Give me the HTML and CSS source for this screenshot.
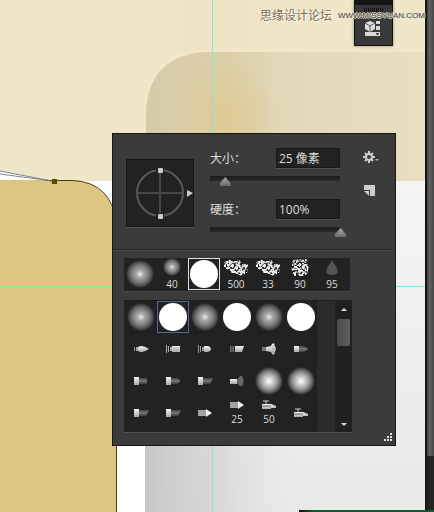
FILE: index.html
```
<!DOCTYPE html>
<html lang="zh-CN">

<head>
    <meta charset="UTF-8">
    <meta name="viewport" content="width=device-width, initial-scale=1.0">
    <title>画笔预设</title>
    <link rel="stylesheet" href="styles.css">
</head>

<body>
    <!-- shared icons -->
    <svg class="symbols" aria-hidden="true">
        <defs>
            <linearGradient id="metal" x1="0" y1="0" x2="0" y2="1">
                <stop offset="0" stop-color="#f4f4f4" />
                <stop offset="1" stop-color="#a8a8a8" />
            </linearGradient>
            <linearGradient id="bristle" x1="0" y1="0" x2="0" y2="1">
                <stop offset="0" stop-color="#444" />
                <stop offset=".5" stop-color="#777" />
                <stop offset="1" stop-color="#3c3c3c" />
            </linearGradient>
            <filter id="rough" x="-10%" y="-20%" width="120%" height="140%">
                <feTurbulence type="fractalNoise" baseFrequency=".45" numOctaves="2" seed="4" />
                <feColorMatrix values="0 0 0 0 .9  0 0 0 0 .9  0 0 0 0 .9  9 0 0 0 -3.9" result="n" />
                <feComposite in="n" in2="SourceGraphic" operator="in" />
            </filter>
        </defs>
        <symbol id="tip-point" viewBox="0 0 16 8">
            <path d="M1 2h1v4H1zM3 2h2v4H3z" fill="#999" />
            <path d="M5 2q4-3 11 2q-7 5-11 2z" fill="url(#metal)" />
        </symbol>
        <symbol id="tip-flat" viewBox="0 0 16 8">
            <path d="M1 0h1v8H1zM3 1h1v6H3zM5 2h2v4H5z" fill="#aaa" />
            <path d="M7 1h8v6H7z" fill="url(#metal)" />
            <path d="M8 3h6M8 5h6" stroke="#999" stroke-width=".5" />
        </symbol>
        <symbol id="tip-curve" viewBox="0 0 16 8">
            <path d="M1 0h1v8H1zM3 1h1v6H3zM5 2h2v4H5z" fill="#999" />
            <path d="M7 1h4q3 1 3 3t-3 3H7z" fill="url(#metal)" />
        </symbol>
        <symbol id="tip-angle" viewBox="0 0 16 8">
            <path d="M1 1h4v6H1z" fill="#777" />
            <path d="M3 1v6" stroke="#222" />
            <path d="M6 1h9l-2 6H6z" fill="url(#metal)" />
        </symbol>
        <symbol id="tip-fan" viewBox="0 0 16 12">
            <path d="M1 4h4v4H1z" fill="#777" />
            <path d="M5 4l5-1l1-2l2-1l1 3l1 3l-1 3l-1 3l-2-1l-1-2l-5-1z" fill="url(#metal)" />
            <path d="M11 4l3-2M11 6h4M11 8l3 2" stroke="#888" stroke-width=".6" />
        </symbol>
        <symbol id="tip-dark-point" viewBox="0 0 16 8">
            <path d="M1 1h5v6H1z" fill="url(#metal)" />
            <path d="M6 1h4q4 1 5 3q-1 2-5 3H6z" fill="url(#bristle)" />
        </symbol>
        <symbol id="tip-dark-flat" viewBox="0 0 16 8">
            <path d="M1 0h5v8H1z" fill="url(#metal)" />
            <path d="M6 1h8v6H6z" fill="url(#bristle)" />
        </symbol>
        <symbol id="tip-dark-round" viewBox="0 0 16 8">
            <path d="M1 0h5v8H1z" fill="url(#metal)" />
            <path d="M6 1h6q3 1 3 3t-3 3H6z" fill="url(#bristle)" />
        </symbol>
        <symbol id="tip-dark-angle" viewBox="0 0 16 8">
            <path d="M1 0h5v8H1z" fill="url(#metal)" />
            <path d="M6 1h10l-3 6H6z" fill="url(#bristle)" />
        </symbol>
        <symbol id="tip-dark-fan" viewBox="0 0 16 12">
            <path d="M1 4h7v5H1z" fill="url(#metal)" />
            <path d="M8 5l3-4h2q3 5 0 10h-2l-3-3z" fill="#666" />
        </symbol>
        <symbol id="tip-pencil" viewBox="0 0 16 8">
            <path d="M1 1h9v6H1z" fill="#aaa" />
            <path d="M1 3h8M1 5h8" stroke="#888" stroke-width=".6" />
            <path d="M9 0l6 4l-6 4z" fill="#eee" />
        </symbol>
        <symbol id="tip-airbrush" viewBox="0 0 16 12">
            <path d="M2 2h6M5 2v3" stroke="#ccc" fill="none" />
            <path d="M1 5h9l5 2v2h-5v1H1z" fill="url(#metal)" />
            <path d="M1 7h9" stroke="#555" stroke-width=".8" />
        </symbol>
        <symbol id="tip-chalk" viewBox="0 0 26 18">
            <path d="M1 4l5-3l5 2l6-1l1 3l7 1l-1 9l-6 2l-5-2l-6-1v-4l-3 1l-3-2z" filter="url(#rough)" />
            <path d="M2 6l5-4M5 8l5-5M9 13l8-9M13 15l9-9M18 15l5-5M10 4l5-1" stroke="#ddd" stroke-width="1.6" />
        </symbol>
        <symbol id="tip-texture" viewBox="0 0 20 20">
            <path d="M3 2l14-1l2 9l-2 9H3L1 10z" filter="url(#rough)" />
            <path d="M2 4l3-2l3 2l3-2l3 2l3-2M2 8l3-2l2 2l4-2l3 3l4-2M1 12l4-2l3 2l3-2l3 2l4-2M3 16l3-2l3 2l3-2l4 2"
                fill="none" stroke="#bbb" />
        </symbol>
        <symbol id="tip-drop" viewBox="0 0 14 18">
            <path d="M7 2q1 3 4 6q4 8-4 8q-8 0-4-8q3-3 4-6z" fill="#555" />
        </symbol>
    </svg>

    <main class="canvas">
        <svg class="artwork" aria-hidden="true">
            <defs>
                <linearGradient id="cream">
                    <stop offset="0" stop-color="#efe7ca" />
                    <stop offset=".3" stop-color="#efe6ca" />
                    <stop offset=".5" stop-color="#efe3c4" />
                    <stop offset=".75" stop-color="#f0e6ca" />
                    <stop offset="1" stop-color="#f0e7ca" />
                </linearGradient>
                <linearGradient id="sand" gradientUnits="userSpaceOnUse" x1="146" x2="425" y1="0" y2="0">
                    <stop offset="0" stop-color="#d6cba9" />
                    <stop offset=".3" stop-color="#dcd0ab" />
                    <stop offset=".5" stop-color="#e1d9b9" />
                    <stop offset="1" stop-color="#e8dfc2" />
                </linearGradient>
                <radialGradient id="glow">
                    <stop offset="0" stop-color="#dfca92" />
                    <stop offset=".5" stop-color="#dfca92" stop-opacity=".5" />
                    <stop offset="1" stop-color="#dfca92" stop-opacity="0" />
                </radialGradient>
                <linearGradient id="light" x1="0" y1="0" x2="0" y2="1">
                    <stop offset="0" stop-color="#f4f4f4" />
                    <stop offset="1" stop-color="#e3e3e3" />
                </linearGradient>
                <linearGradient id="shade">
                    <stop offset="0" stop-color="#c6c6c6" />
                    <stop offset=".5" stop-color="#d6d6d6" stop-opacity=".8" />
                    <stop offset="1" stop-color="#e3e3e3" stop-opacity="0" />
                </linearGradient>
            </defs>
            <rect width="100%" height="100%" fill="#fff" />
            <rect width="100%" height="181" fill="url(#cream)" />
            <path d="M143 181V110Q146 52 205 49H2000V181z" fill="#f2e7c9" />
            <path d="M146 181V115Q147 56 205 52H2000V181z" fill="url(#sand)" />
            <ellipse cx="225" cy="118" rx="50" ry="64" fill="url(#glow)" />
            <rect x="145" y="181" width="100%" height="100%" fill="url(#light)" />
            <rect x="145" y="181" width="150" height="100%" fill="url(#shade)" />

            <!-- guides -->
            <path d="M212.5 0V2000M0 286.5H2000" stroke="#7fe8dc" />

            <!-- filled path with its anchor and handles -->
            <path d="M0 171L50 180H0z" fill="#fff" />
            <path d="M-2 180H72Q112 182 116 226V2000H-2z" fill="#dcc681" />
            <path d="M0 286.5H116" stroke="#9fdcae" />
            <path d="M46 180.5H72Q113 182 116.500 226V2000" fill="none" stroke="#4e3f0c" />
            <path d="M0 171L52 181M0 174L52 181" stroke="#666" stroke-width=".8" />
            <rect x="52" y="179" width="5" height="5" fill="#5a4708" />
        </svg>

        <div class="watermark">
            <span>思缘设计论坛</span>
            <a class="site" href="#">WWW.MISSYUAN.COM</a>
        </div>

        <aside class="dock">
            <div class="dock-head"></div>
            <div class="dock-grip"></div>
            <button class="dock-button" aria-label="3D">
                <svg width="17" height="17" viewBox="0 0 17 17">
                    <path d="M5 1l5 2v6l-5 3l-5-3V3z" fill="#ddd" />
                    <path d="M0 3l5 3l5-3M5 6v6" fill="none" stroke="#555" />
                    <path d="M11 1h4v3h-4zM11 6h4v4h-4zM0 12h15v4H0z" fill="#d8d8d8" />
                    <path d="M11 13h3l-1 2h-1z" fill="#222" />
                </svg>
            </button>
        </aside>

        <section class="panel">
            <div class="settings">
                <div class="angle">
                    <svg width="68" height="68" viewBox="0 0 68 68">
                        <path d="M34 12v44M11 34h46" stroke="#484848" stroke-width="2" />
                        <circle cx="34" cy="34" r="23" fill="none" stroke="#595959" stroke-width="2" />
                        <path d="M30 9h8v5h-8zM30 54h8v5h-8z" fill="#222" />
                        <rect x="32" y="9" width="5" height="5" rx="1" fill="#ccc" />
                        <rect x="32" y="55" width="5" height="5" rx="1" fill="#ccc" />
                        <path d="M61 31l6 3l-6 4z" fill="#ccc" />
                    </svg>
                </div>

                <div class="sliders">
                    <div class="field">
                        <label for="size">大小：</label>
                        <input type="text" class="value" id="size" value="25 像素">
                    </div>
                    <input type="range" class="slider" aria-label="大小" min="0" max="100" value="12">
                    <div class="field">
                        <label for="hardness">硬度：</label>
                        <input type="text" class="value" id="hardness" value="100%">
                    </div>
                    <input type="range" class="slider" aria-label="硬度" min="0" max="100" value="100">
                </div>

                <div class="tools">
                    <button aria-label="设置">
                        <svg width="17" height="13" viewBox="0 0 17 13">
                            <circle cx="6" cy="6" r="3" fill="none" stroke="#ccc" stroke-width="2" />
                            <path d="M6 0v3M6 9v3M0 6h3M9 6h3M2 2l2 2M8 8l2 2M10 2L8 4M4 8l-2 2" stroke="#ccc"
                                stroke-width="2" />
                            <path d="M12 8h4l-2 2z" fill="#aaa" />
                        </svg>
                    </button>
                    <button aria-label="新建预设">
                        <svg width="17" height="12" viewBox="0 0 17 12">
                            <path d="M1 0h11v11H7V5H1z" fill="#ccc" />
                            <path d="M1 6h5v5z" fill="#ccc" />
                        </svg>
                    </button>
                </div>
            </div>

            <div class="recent">
                <button class="brush"><i class="soft"></i></button>
                <button class="brush sized"><i class="soft small"></i><span>40</span></button>
                <button class="brush current"><i class="hard"></i></button>
                <button class="brush sized"><svg class="chalk"><use href="#tip-chalk" /></svg><span>500</span></button>
                <button class="brush sized"><svg class="chalk"><use href="#tip-chalk" /></svg><span>33</span></button>
                <button class="brush sized"><svg class="chalk"><use href="#tip-texture" /></svg><span>90</span></button>
                <button class="brush sized"><svg class="chalk"><use href="#tip-drop" /></svg><span>95</span></button>
            </div>

            <div class="presets">
                <div class="grid">
                    <button class="brush"><i class="soft"></i></button>
                    <button class="brush selected"><i class="hard"></i></button>
                    <button class="brush"><i class="soft"></i></button>
                    <button class="brush"><i class="hard"></i></button>
                    <button class="brush"><i class="soft"></i></button>
                    <button class="brush"><i class="hard"></i></button>

                    <button class="brush"><svg class="tip"><use href="#tip-point" /></svg></button>
                    <button class="brush"><svg class="tip"><use href="#tip-flat" /></svg></button>
                    <button class="brush"><svg class="tip"><use href="#tip-curve" /></svg></button>
                    <button class="brush"><svg class="tip"><use href="#tip-angle" /></svg></button>
                    <button class="brush"><svg class="tip tall"><use href="#tip-fan" /></svg></button>
                    <button class="brush"><svg class="tip"><use href="#tip-dark-point" /></svg></button>

                    <button class="brush"><svg class="tip"><use href="#tip-dark-flat" /></svg></button>
                    <button class="brush"><svg class="tip"><use href="#tip-dark-round" /></svg></button>
                    <button class="brush"><svg class="tip"><use href="#tip-dark-angle" /></svg></button>
                    <button class="brush"><svg class="tip tall"><use href="#tip-dark-fan" /></svg></button>
                    <button class="brush"><i class="soft bright"></i></button>
                    <button class="brush"><i class="soft bright"></i></button>

                    <button class="brush"><svg class="tip"><use href="#tip-dark-angle" /></svg></button>
                    <button class="brush"><svg class="tip"><use href="#tip-dark-angle" /></svg></button>
                    <button class="brush"><svg class="tip"><use href="#tip-pencil" /></svg></button>
                    <button class="brush numbered"><svg class="tip"><use href="#tip-pencil" /></svg><span>25</span></button>
                    <button class="brush numbered"><svg class="tip tall"><use href="#tip-airbrush" /></svg><span>50</span></button>
                    <button class="brush"><svg class="tip tall"><use href="#tip-airbrush" /></svg></button>
                </div>
                <div class="scrollbar">
                    <button class="arrow" aria-label="向上"><svg width="6" height="3"><path d="M0 3l3-3l3 3z" fill="#ddd" /></svg></button>
                    <div class="thumb"></div>
                    <button class="arrow down" aria-label="向下"><svg width="6" height="3"><path d="M0 0h6l-3 3z" fill="#ddd" /></svg></button>
                </div>
            </div>

            <svg class="resize" width="9" height="9" viewBox="0 0 9 9">
                <path d="M7 0h2v2H7zM7 3h2v2H7zM4 3h2v2H4zM7 6h2v2H7zM4 6h2v2H4zM1 6h2v2H1z" fill="#ddd" />
            </svg>
        </section>
    </main>

    <div class="window-edge">
        <div class="window-thumb"></div>
    </div>
    <div class="taskline"></div>
</body>

</html>
```

FILE: styles.css
```
* {
    box-sizing: border-box;
}

body {
    margin: 0;
    height: 100vh;
    display: flex;
    overflow: hidden;
    font-family: "Open Sans", "Noto Sans CJK SC", sans-serif;
    font-size: 12px;
    color: #ddd;
}

button {
    display: flex;
    padding: 0;
    border: none;
    background: none;
    color: inherit;
    font: inherit;
}

.symbols {
    position: absolute;
    width: 0;
    height: 0;
}

.canvas {
    position: relative;
    flex: 1;
}

.artwork {
    position: absolute;
    width: 100%;
    height: 100%;
}

/* watermark and docked panel */
.watermark {
    position: absolute;
    z-index: 2;
    top: 8px;
    right: 0;
    display: flex;
    align-items: center;
    gap: 6px;
    line-height: 16px;
    color: #77705f;
    text-shadow: 1px 1px #fffbe8;
}

.site {
    font-family: "Liberation Sans", sans-serif;
    font-size: 8px;
    color: #444;
    text-decoration: none;
    text-shadow: 1px 0 #e8e2d0, -1px 0 #e8e2d0, 0 1px #e8e2d0, 0 -1px #e8e2d0;
}

.dock {
    position: absolute;
    top: 0;
    right: 32px;
    width: 39px;
    height: 46px;
    display: flex;
    flex-direction: column;
    align-items: center;
    background: #383838;
    border: 1px solid #111;
    border-top: none;
    box-shadow: 0 0 3px rgba(0, 0, 0, .4);
}

.dock-head {
    width: 100%;
    height: 5px;
    background: #161616;
}

.dock-grip {
    width: 20px;
    height: 4px;
    margin: 3px 0 8px;
    background: repeating-linear-gradient(90deg, #111 0 1px, #383838 1px 2px);
}

/* brush panel */
.panel {
    position: absolute;
    top: 133px;
    left: 112px;
    width: 284px;
    padding-bottom: 13px;
    background: #3b3b3b;
    border: 1px solid #171717;
}

.settings {
    display: flex;
    height: 116px;
    padding: 14px 13px 0;
    border-bottom: 1px solid #2a2a2a;
    box-shadow: 0 1px #484848;
}

.angle {
    width: 68px;
    height: 68px;
    margin-top: 11px;
    flex-shrink: 0;
    background: #222;
    box-shadow: inset 0 0 0 1px #171717, 0 1px #555;
}

.sliders {
    width: 130px;
    margin-left: 16px;
}

.field {
    display: flex;
    justify-content: space-between;
    align-items: center;
}

/* the TC face centres the full-width colon */
.field label {
    font-family: "Noto Sans CJK TC", sans-serif;
    line-height: 20px;
}

.value {
    width: 64px;
    height: 20px;
    padding: 0 2px;
    border: 1px solid #181818;
    background: #222;
    box-shadow: 0 1px #505050;
    color: #ddd;
    font: inherit;
}

/* wider than its track by half a thumb at each end */
.slider {
    -webkit-appearance: none;
    appearance: none;
    display: block;
    width: calc(100% + 12px);
    height: 15px;
    margin: 6px -6px 10px;
    background: linear-gradient(#1c1c1c, #2a2a2a) no-repeat center 2px / calc(100% - 12px) 5px;
}

.slider::-webkit-slider-thumb {
    -webkit-appearance: none;
    width: 11px;
    height: 9px;
    background: linear-gradient(#aaa, #6a6a6a);
    clip-path: polygon(50% 0, 100% 70%, 100% 100%, 0 100%, 0 70%);
}

.tools {
    display: flex;
    flex-direction: column;
    gap: 21px;
    margin: 3px 0 0 23px;
}

.recent {
    display: flex;
    width: 226px;
    height: 33px;
    margin: 8px 0 9px 11px;
    background: #222;
    box-shadow: 0 1px #484848;
}

.brush {
    width: 32px;
    height: 32px;
    flex-shrink: 0;
    flex-direction: column;
    align-items: center;
    justify-content: center;
    font-size: 10px;
    line-height: 12px;
}

.soft,
.hard {
    width: 28px;
    height: 28px;
    border-radius: 50%;
}

.soft {
    background: radial-gradient(closest-side, #eee, #aaa 25%, #7c7c7c 60%, #4c4c4c 85%, #222);
}

.bright {
    background: radial-gradient(closest-side, #fff, #c4c4c4 35%, #8a8a8a 65%, #555 85%, #222);
}

.small {
    width: 18px;
    height: 18px;
}

.hard {
    background: #fff;
}

.sized {
    justify-content: space-between;
}

.chalk {
    width: 26px;
    height: 19px;
}

.current {
    border: 1px solid #ddd;
}

.selected {
    border: 1px solid #56689a;
}

.presets {
    display: flex;
    justify-content: space-between;
    width: 228px;
    margin-left: 11px;
    background: #2b2b2b;
    border-top: 1px solid #1c1c1c;
    box-shadow: 0 1px #505050;
}

.grid {
    display: grid;
    grid-template-columns: repeat(6, 32px);
    padding: 0 0 3px 1px;
    background: #222;
}

.grid .brush {
    box-shadow: inset -1px -1px #1e1e1e;
}

.tip {
    width: 16px;
    height: 8px;
    flex-shrink: 0;
}

.tall {
    height: 12px;
}

.numbered {
    gap: 4px;
}

.numbered .tall {
    margin: -2px 0;
}

.scrollbar {
    width: 17px;
    display: flex;
    flex-direction: column;
    align-items: center;
    padding: 7px 0 6px;
    background: #202020;
}

.thumb {
    width: 13px;
    height: 27px;
    margin-top: 8px;
    border-radius: 2px;
    background: linear-gradient(90deg, #494949, #606060);
}

.down {
    margin-top: auto;
}

.resize {
    position: absolute;
    right: 3px;
    bottom: 3px;
}

/* window frame */
.window-edge {
    width: 9px;
    border-left: 2px solid #151515;
    background: #232323;
}

.window-thumb {
    height: 89%;
    background: linear-gradient(90deg, #3c3c3c, #606060 30%, #4a4a4a);
}

.taskline {
    position: absolute;
    right: 0;
    bottom: 0;
    width: 31%;
    height: 2px;
    background: linear-gradient(90deg, #111, #0f5a30 10%);
}
```
